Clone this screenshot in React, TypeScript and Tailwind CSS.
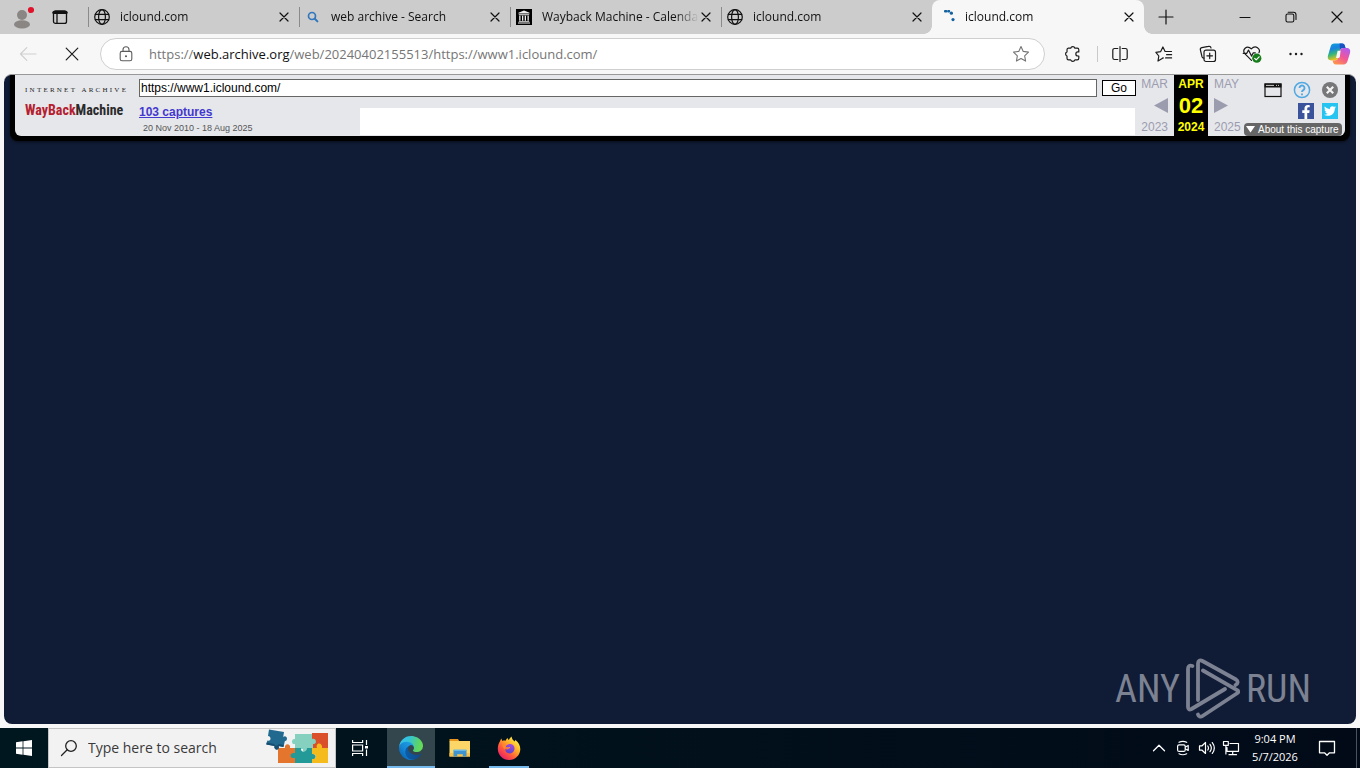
import React from "react";
import { FaFacebookF, FaTwitter } from "react-icons/fa";

const ui = "font-['Open_Sans','Noto_Sans',sans-serif]";
const arial = "font-['Liberation_Sans',Arial,sans-serif]";

type IconProps = { className?: string };

function Stroke({ children, className = "size-5", sw = 1.2, box = 20 }: { children: React.ReactNode; className?: string; sw?: number; box?: number }) {
  return (
    <svg viewBox={`0 0 ${box} ${box}`} className={className} fill="none" stroke="currentColor" strokeWidth={sw} strokeLinecap="round" strokeLinejoin="round" aria-hidden="true">
      {children}
    </svg>
  );
}

const Cross = ({ className = "size-3" }: IconProps) => (
  <Stroke className={className} box={12} sw={1.2}>
    <path d="M2 2l8 8M10 2l-8 8" />
  </Stroke>
);

const Globe = () => (
  <Stroke className="size-4 shrink-0" box={16} sw={1.2}>
    <circle cx="8" cy="8" r="7.3" />
    <ellipse cx="8" cy="8" rx="3.4" ry="7.3" />
    <path d="M1.3 5.3h13.4M1.3 10.7h13.4" />
  </Stroke>
);

const Lens = () => (
  <svg viewBox="0 0 16 16" className="size-4 shrink-0" fill="none" stroke="#3277bd" strokeLinecap="round" aria-hidden="true">
    <circle cx="7" cy="7" r="3.5" strokeWidth="1.7" />
    <path d="M9.8 9.8l2.6 2.6" strokeWidth="2" />
  </svg>
);

const ArchiveMark = () => (
  <svg viewBox="0 0 16 16" className="size-4 shrink-0" aria-hidden="true">
    <path fill="#000" d="M0 0h16v16H0z" />
    <path fill="#eee" d="M8 1.600l5.600 2.200v.8H2.400v-.8zM2.800 5.200h10.400v1H2.800zM3.200 6.800h1.300v5H3.200zM6 6.800h1.300v5H6zM8.700 6.800H10v5H8.700zM11.500 6.800h1.300v5h-1.300zM2.800 12.200h10.400v.8H2.800zM2 13.600h12v1H2z" />
  </svg>
);

const Loading = () => (
  <svg viewBox="0 0 16 16" className="size-4 shrink-0" fill="#12609f" aria-hidden="true">
    <rect x="5" y="1" width="3.4" height="2.6" rx="1" />
    <rect x="8.2" y="1" width="3" height="2.4" rx="1" />
    <circle cx="12.400" cy="4.200" r="1.600" />
    <circle cx="14" cy="10.600" r="1.600" />
  </svg>
);

function Tab({ icon, title, active }: { icon: React.ReactNode; title: string; active?: boolean }) {
  return (
    <div
      role="tab"
      aria-selected={!!active}
      className={
        active
          ? "relative flex h-full w-[212px] min-w-0 items-center rounded-t-lg bg-[#f7f7f7] pr-2 pl-[7px]"
          : "flex h-full w-[211px] min-w-0 items-center pr-2"
      }
    >
      {!active && <span className="mr-[5px] h-5 w-px shrink-0 bg-[#8a8a8a]" />}
      {active && (
        <>
          <span className="absolute bottom-0 -left-2 size-2 bg-[radial-gradient(circle_at_0_0,#cccccc_7.5px,#f7f7f7_8px)]" />
          <span className="absolute -right-2 bottom-0 size-2 bg-[radial-gradient(circle_at_100%_0,#cccccc_7.5px,#f7f7f7_8px)]" />
        </>
      )}
      {icon}
      <span className="ml-2.5 min-w-0 flex-1 overflow-hidden whitespace-nowrap text-[12px] leading-4 text-[#111] [mask-image:linear-gradient(to_right,#000_calc(100%-24px),transparent)]">
        {title}
      </span>
      <button aria-label={`Close ${title}`} className="flex size-3.5 shrink-0 items-center justify-center">
        <Cross />
      </button>
    </div>
  );
}

function TabStrip() {
  return (
    <div className="flex h-[34px] items-center bg-[#cccccc] text-[#111]">
      <div className="flex w-[88px] shrink-0 items-center">
        <button aria-label="Profile" className="flex w-11 justify-center">
          <svg viewBox="0 0 24 24" className="size-6" aria-hidden="true">
            <circle cx="12" cy="10" r="5" fill="#8a8683" />
            <ellipse cx="12" cy="19.4" rx="8" ry="4.2" fill="#8a8683" />
            <circle cx="21" cy="5" r="3.1" fill="#e0132b" />
          </svg>
        </button>
        <button aria-label="Tab actions" className="flex w-8 justify-center">
          <Stroke className="size-4" box={16} sw={1.3}>
            <rect x="1.5" y="1.8" width="13" height="12.6" rx="2" />
            <path d="M1.8 3.4h12.4" strokeWidth="3" />
            <path d="M5 4v10" />
          </Stroke>
        </button>
      </div>
      <div role="tablist" className="flex h-full min-w-0">
        <Tab icon={<Globe />} title="iclound.com" />
        <Tab icon={<Lens />} title="web archive - Search" />
        <Tab icon={<ArchiveMark />} title="Wayback Machine - Calenda" />
        <Tab icon={<Globe />} title="iclound.com" />
        <Tab icon={<Loading />} title="iclound.com" active />
      </div>
      <button aria-label="New tab" className="flex w-11 shrink-0 justify-center">
        <Stroke className="size-4" box={16} sw={1.2}>
          <path d="M8 1v14M1 8h14" />
        </Stroke>
      </button>
      <div className="ml-auto flex shrink-0">
        <button aria-label="Minimize" className="flex w-[46px] items-center justify-center">
          <Stroke className="size-3" box={12} sw={1.1}><path d="M1 6.5h10" /></Stroke>
        </button>
        <button aria-label="Restore" className="flex w-[46px] items-center justify-center">
          <Stroke className="size-3" box={12} sw={1.1}>
            <rect x="1" y="3" width="7.8" height="8" rx="1.6" />
            <path d="M3.2 1.2h5.2a2.6 2.6 0 0 1 2.6 2.6v4.6" />
          </Stroke>
        </button>
        <button aria-label="Close" className="flex w-[46px] items-center justify-center">
          <Stroke className="size-3" box={12} sw={1.2}><path d="M1 1l10 10M11 1L1 11" /></Stroke>
        </button>
      </div>
    </div>
  );
}

const Copilot = () => (
  <svg viewBox="0 0 24 24" className="size-6" aria-hidden="true">
    <defs>
      <linearGradient id="cpA" x1="0" y1="0" x2="0.3" y2="1">
        <stop offset="0" stopColor="#0ea5d8" />
        <stop offset="0.35" stopColor="#1883e0" />
        <stop offset="0.65" stopColor="#35b77a" />
        <stop offset="1" stopColor="#f5c518" />
      </linearGradient>
      <linearGradient id="cpB" x1="0.8" y1="0" x2="0.2" y2="1">
        <stop offset="0" stopColor="#b05cf0" />
        <stop offset="0.5" stopColor="#f0559a" />
        <stop offset="1" stopColor="#ff9548" />
      </linearGradient>
    </defs>
    <path fill="url(#cpA)" d="M7.4 1.6h7.8c1.5 0 2.2.7 2.6 2l.7 2.5h-2.4c-1.7 0-2.6.8-3.1 2.5l-2.2 7.6c-.5 1.6-1.3 2.3-2.9 2.3H4.4c-2.8 0-4.2-1.8-3.4-4.9L3.500 5C4.200 2.600 5.300 1.600 7.400 1.600z" />
    <path fill="#1a52c4" d="M12.500 1.600h2.700c1.500 0 2.200.7 2.600 2l.7 2.500h-2.400c-1.500 0-2.400.6-3 2z" />
    <path fill="url(#cpB)" d="M16.600 22.400H8.800c-1.500 0-2.200-.7-2.600-2l-.6-1.900h2.300c1.700 0 2.600-.8 3.100-2.500l2.200-7.600c.5-1.600 1.300-2.300 2.900-2.300h3.500c2.800 0 4.200 1.800 3.400 4.900L20.500 19c-.7 2.400-1.800 3.400-3.900 3.400z" />
    <path fill="#f7f7f7" d="M10.600 8.800h3L12.900 14.600c-.1.900-.6 1.300-1.400 1.300H9z" />
  </svg>
);

function AddressBar() {
  const tool = "flex h-8 w-11 shrink-0 items-center justify-center";
  return (
    <div className="flex h-10 items-center bg-[#f7f7f7] text-[#1b1b1b]">
      <button aria-label="Back" className="flex w-14 shrink-0 justify-center text-[#cfcfcf]">
        <Stroke><path d="M2.500 10h15.500M8.800 3.700L2.500 10l6.300 6.300" /></Stroke>
      </button>
      <button aria-label="Stop" className="mr-3 flex w-8 shrink-0 justify-center">
        <Stroke className="size-4" box={16} sw={1.2}><path d="M2.200 2.200l11.600 11.600M13.800 2.200L2.200 13.800" /></Stroke>
      </button>
      <div className="flex h-8 min-w-0 flex-1 items-center rounded-full border border-[#cfcfcf] bg-white pr-3.5 pl-4">
        <button aria-label="Site information" className="flex text-[#5c5c5c]">
          <Stroke className="size-[18px]" box={18} sw={1.1}>
            <rect x="3.200" y="6.400" width="11.600" height="9.400" rx="1.800" />
            <path d="M6 6.300V4.800a3 3 0 0 1 6 0v1.500" />
            <circle cx="9" cy="11.200" r=".5" fill="currentColor" />
          </Stroke>
        </button>
        <div className="ml-3.5 min-w-0 flex-1 overflow-hidden text-[13px] leading-5 whitespace-nowrap text-[#767676]">
          https://<span className="text-[#111]">web.archive.org</span>/web/20240402155513/https://www1.iclound.com/
        </div>
        <button aria-label="Add to favorites" className="flex text-[#757575]">
          <Stroke className="size-[18px]" box={18} sw={1.1}>
            <path d="M9 1.500l2.250 4.900 5.250.7-3.850 3.700.95 5.300L9 13.500l-4.600 2.600.95-5.300L1.500 7.100l5.250-.7z" />
          </Stroke>
        </button>
      </div>
      <div className="ml-2 flex shrink-0 items-center">
        <button aria-label="Extensions" className="flex h-8 w-10 shrink-0 items-center justify-center pr-px">
          <Stroke className="size-[18px]" box={18} sw={1.200}>
            <path d="M4.400 3.200h2.300a2.200 2.200 0 0 1 4.200 0h2.300a1.600 1.600 0 0 1 1.600 1.600v2.100h-.9a2 2 0 0 0 0 4.100h.9v2.300a1.600 1.600 0 0 1-1.600 1.600h-2.300a2.200 2.200 0 0 1-4.200 0H4.600A1.600 1.600 0 0 1 3 13.300V11a2.200 2.200 0 0 1 0-4.100V4.800a1.600 1.600 0 0 1 1.400-1.600z" />
          </Stroke>
        </button>
        <span className="ml-1 h-4 w-px bg-[#c9c9c9]" />
        <button aria-label="Split screen" className={tool}>
          <Stroke className="size-[18px]" box={18} sw={1.200}>
            <path d="M9 1.500v15M6.800 3.500H3.600A1.800 1.800 0 0 0 1.800 5.300v7.400a1.800 1.800 0 0 0 1.800 1.800h3.200M11.200 3.500h3.200a1.800 1.800 0 0 1 1.800 1.800v7.400a1.800 1.800 0 0 1-1.800 1.800h-3.200" />
          </Stroke>
        </button>
        <button aria-label="Favorites" className={tool}>
          <Stroke className="size-[18px]" box={18} sw={1.200}>
            <path d="M8.300 12.900l-1.100.5L3 16l.8-5L.9 7.300l4.800-.7L7.900 2l2.200 4.500h6.400M11.600 9.700h5M10.600 12.900h6" />
          </Stroke>
        </button>
        <button aria-label="Collections" className={tool}>
          <Stroke className="size-[18px]" box={18} sw={1.200}>
            <path d="M5 13.100a2 2 0 0 1-2-1.400L1.400 5a2 2 0 0 1 1.400-2.400l6.600-1.200A2 2 0 0 1 12 3" />
            <rect x="5" y="5.200" width="11.500" height="11.300" rx="2" />
            <path d="M10.700 8v5.600M7.900 10.800h5.600" />
          </Stroke>
        </button>
        <button aria-label="Browser essentials" className={tool}>
          <svg viewBox="0 0 20 20" className="size-5" fill="none" stroke="currentColor" strokeWidth="1.200" strokeLinecap="round" strokeLinejoin="round" aria-hidden="true">
            <path d="M9.500 16.300L3 9.800C-.3 6.100 4.500.3 9.300 4.800c4.500-4.600 9.500.4 7.700 3.800M1.200 9.300h3.600l1.700-3.200 3 6 1.800-3.300h2" />
            <circle cx="14.800" cy="14.200" r="4.600" fill="#177d1b" stroke="none" />
            <path d="M12.700 14.300l1.500 1.500 2.900-3" stroke="#fff" />
          </svg>
        </button>
        <button aria-label="Settings and more" className={tool}>
          <svg viewBox="0 0 18 18" className="size-[18px]" fill="currentColor" aria-hidden="true">
            <circle cx="3.500" cy="9" r="1.200" /><circle cx="9" cy="9" r="1.200" /><circle cx="14.500" cy="9" r="1.200" />
          </svg>
        </button>
        <button aria-label="Copilot" className="flex h-8 w-[42px] shrink-0 items-center justify-center"><Copilot /></button>
      </div>
    </div>
  );
}

function WaybackBar() {
  return (
    <div className={`mx-1.5 rounded-b-lg border-x-[5px] border-b-[5px] border-black bg-black shadow-[0_1px_3px_#0008] ${arial}`}>
      <div className="flex h-[61px] rounded-b-md bg-[#e6e7eb] pr-[3px]">
        <a href="#home" aria-label="Internet Archive Wayback Machine" className="flex w-[124px] shrink-0 flex-col items-start pt-[11px] pl-2.5 whitespace-nowrap">
          <span className="flex w-[101px] justify-between font-['Liberation_Serif',serif] text-[7px] leading-2 text-[#222]">
            {"INTERNET".split("").map((c, i) => <span key={i}>{c}</span>)}
            <span className="w-0.5" />
            {"ARCHIVE".split("").map((c, i) => <span key={i}>{c}</span>)}
          </span>
          <span className="font-['Roboto_Condensed','Liberation_Sans_Narrow',sans-serif] text-[14px] leading-8 font-bold text-[#b4202f]">
            WayBack<span className="text-[#2a2a2a]">Machine</span>
          </span>
        </a>
        <div className="flex min-w-0 flex-1 flex-col">
          <form className="flex gap-[5px] pt-1" onSubmit={(e) => e.preventDefault()}>
            <input aria-label="Archived address" defaultValue="https://www1.iclound.com/" className="h-[18px] min-w-0 flex-1 border border-[#666] bg-white px-px text-[12px] leading-4 text-black" />
            <button className="mt-px h-4 w-[34px] border border-black bg-white text-[12px] leading-3 text-black">Go</button>
          </form>
          <div className="flex flex-1">
            <div className="flex w-[221px] shrink-0 flex-col items-start pt-[7px]">
              <a href="#captures" className="text-[12px] leading-4 font-bold text-[#4338cf] underline">103 captures</a>
              <span className="pt-0.5 pl-1 text-[9px] leading-3 text-[#555]">20 Nov 2010 - 18 Aug 2025</span>
            </div>
            <div className="mt-[11px] mr-px mb-px flex-1 bg-white" />
          </div>
        </div>
        <div className="grid shrink-0 grid-cols-[38px_34px_36px] text-[12px] text-[#9c9caf]">
          <div className="flex flex-col items-end justify-between pt-0.5 pr-1.5 pb-0.5">
            <span className="leading-[14px]">MAR</span>
            <svg viewBox="0 0 14 15" className="h-[15px] w-3.5" fill="#9c9caf" aria-hidden="true"><path d="M14 0v15L0 7.500z" /></svg>
            <span className="leading-[14px]">2023</span>
          </div>
          <div className="flex flex-col items-center justify-between bg-black pt-0.5 pb-0.5 font-bold text-[#ffff00]">
            <span className="leading-[14px]">APR</span>
            <span className="text-[22px] leading-6">02</span>
            <span className="leading-[14px]">2024</span>
          </div>
          <div className="flex flex-col items-start justify-between pt-0.5 pb-0.5 pl-1.5">
            <span className="leading-[14px]">MAY</span>
            <svg viewBox="0 0 14 15" className="h-[15px] w-3.5" fill="#9c9caf" aria-hidden="true"><path d="M0 0v15l14-7.500z" /></svg>
            <span className="leading-[14px]">2025</span>
          </div>
        </div>
        <div className="flex w-[98px] shrink-0 flex-col items-end pt-1.5">
          <div className="flex w-full items-center justify-between pr-1 pl-5">
            <button aria-label="Screenshot">
              <svg viewBox="0 0 18 16" className="block h-4 w-[18px]" aria-hidden="true">
                <path fill="#111" d="M.5 1.500h17V5.500H.5z" />
                <path fill="#eee" d="M2 2.800h8v1H2zM12 2.800h1v1h-1zM14 2.800h1v1h-1z" />
                <rect x="1" y="2" width="16" height="12.500" fill="none" stroke="#111" strokeWidth="1.200" />
              </svg>
            </button>
            <button aria-label="Help">
              <svg viewBox="0 0 18 18" className="block size-[18px]" fill="none" stroke="#51a8e2" aria-hidden="true">
                <circle cx="9" cy="9" r="7.600" strokeWidth="1.500" />
                <path d="M6.500 7a2.500 2.500 0 1 1 3.800 2.100c-.9.600-1.300 1-1.300 2" strokeWidth="1.900" />
                <path d="M9 12.400v1.800" strokeWidth="1.900" />
              </svg>
            </button>
            <button aria-label="Hide toolbar">
              <svg viewBox="0 0 16 16" className="block size-4" aria-hidden="true">
                <circle cx="8" cy="8" r="8" fill="#77777a" />
                <path d="M4.800 4.800l6.400 6.400M11.200 4.800l-6.400 6.400" stroke="#f4f4f4" strokeWidth="2.200" />
              </svg>
            </button>
          </div>
          <div className="flex gap-2 pt-1 pr-1 pb-1">
            <a href="#facebook" aria-label="Share on Facebook" className="flex size-4 items-end justify-end bg-[#3a539b] pr-px text-white">
              <FaFacebookF className="size-3.5" />
            </a>
            <a href="#twitter" aria-label="Share on Twitter" className="flex size-4 items-center justify-center bg-[#26c4f1] text-white">
              <FaTwitter className="size-3" />
            </a>
          </div>
          <button className="flex h-[13px] w-full shrink-0 items-center gap-[3px] rounded bg-[#666] pl-0.5 text-[10px] leading-3 whitespace-nowrap text-white">
            <svg viewBox="0 0 9 7" className="h-[7px] w-[9px]" fill="#fff" aria-hidden="true"><path d="M0 0h9L4.500 6.500z" /></svg>
            About this capture
          </button>
        </div>
      </div>
    </div>
  );
}

function Watermark() {
  const word = "font-['Roboto_Condensed','Liberation_Sans_Narrow',sans-serif] text-[38px] leading-10";
  return (
    <div className="absolute right-[45px] bottom-1 flex items-center gap-1.5 text-[#7c8292]">
      <span className={word}>ANY</span>
      <svg viewBox="0 0 54 62" className="h-[62px] w-[54px]" fill="none" stroke="currentColor" strokeWidth="3.800" strokeLinecap="round" strokeLinejoin="round" aria-hidden="true">
        <path d="M6.500 8c-3-1-4.500 0-4.500 3V49c0 2.500 1.300 3 3.500 2L39 31" />
        <path d="M12 42V5.500c0-3 2-4 4.500-2.500L50 21.500c2.400 1.500 2 4.600-.5 5.500" />
        <path d="M17 12.500L51.500 32.300c1 .8 1 2 0 2.700L16.500 58c-2 1.300-4 .3-4.500-1.500" />
      </svg>
      <span className={word}>RUN</span>
    </div>
  );
}

const PuzzleArt = () => (
  <svg viewBox="0 0 64 38" className="h-[38px] w-16 shrink-0" aria-hidden="true">
    <path fill="#d9502a" d="M46 4h16v16H46z" />
    <path fill="#85d0bf" d="M29 5h17v5c4-2 6 5 1 5v5h-5c1 5-6 5-5 0h-8v-5c-4 1-4-6 0-5z" />
    <path fill="#e4752d" d="M12 19h7c-1-5 6-5 5 0h6v15H12z" />
    <path fill="#239a98" d="M29 19h6c-1 5 6 5 6 0h5v6c5-1 5 6 0 5v4H29v-5c-6 1-6-6 0-5z" />
    <path fill="#f5ba1b" d="M46 19h5c-2-6 6-6 5 0h6v15H46v-4c5 1 5-6 0-5z" />
    <path fill="#22698f" d="M3 .5L18 3l-.8 5c3-3 6 3 1.600 4.300L17.500 18l-5-1c2 5-5 5-4 0L.5 15.500l.8-4C5.500 13 5.500 7 2 7z" />
    <path fill="#174d70" d="M.5 13.500l8 1.500c-.5 2 3 2 4 0l5.200 1-.4 2-4.500-.9c1 5-5.500 4-4.300 0l-8.200-1.600z" />
  </svg>
);

const EdgeLogo = () => (
  <svg viewBox="0 0 256 256" className="size-6" aria-hidden="true">
    <defs>
      <linearGradient id="edA" x1="0.2" y1="0.5" x2="1" y2="0.6"><stop stopColor="#0c59a4" /><stop offset="1" stopColor="#114a8b" /></linearGradient>
      <linearGradient id="edB" x1="0.8" y1="0.2" x2="0.2" y2="0.9"><stop stopColor="#1b9de2" /><stop offset="0.5" stopColor="#1787d4" /><stop offset="1" stopColor="#0667b8" /></linearGradient>
      <linearGradient id="edC" x1="0" y1="0.3" x2="1" y2="0.5"><stop stopColor="#35c1f1" /><stop offset="0.4" stopColor="#34c3d5" /><stop offset="0.8" stopColor="#5bd46a" /><stop offset="1" stopColor="#66dc56" /></linearGradient>
    </defs>
    <path fill="url(#edA)" d="M231 190.500c-3.400 1.800-6.900 3.400-10.500 4.700a101.500 101.500 0 0 1-35.900 6.500c-47.300 0-88.500-32.500-88.500-74.300a31.500 31.500 0 0 1 16.400-27.300c-42.800 1.800-53.800 46.400-53.800 72.500 0 74 68.100 81.400 82.800 81.400 7.900 0 19.800-2.300 27-4.600l1.300-.4a128.300 128.300 0 0 0 66.600-52.800 4 4 0 0 0-5.400-5.700z" />
    <path fill="url(#edB)" d="M105.700 241.500a79.200 79.200 0 0 1-22.700-21.300 80.700 80.700 0 0 1 29.500-120c3.200-1.500 8.500-4.100 15.600-4a32.400 32.400 0 0 1 25.700 13 31.900 31.900 0 0 1 6.300 18.700c0-.2 24.500-79.600-80-79.600-43.900 0-80 41.600-80 78.200a130.200 130.200 0 0 0 12.100 56 128 128 0 0 0 156.400 67 75.500 75.500 0 0 1-62.800-8z" />
    <path fill="url(#edC)" d="M152.300 148.900c-.8 1-3.300 2.500-3.300 5.700 0 2.600 1.700 5.100 4.700 7.200 14.400 10 41.500 8.700 41.600 8.700a59.600 59.600 0 0 0 30.300-8.400 61.400 61.400 0 0 0 30.400-52.900c.3-22.400-8-37.300-11.300-43.900C223.500 23.900 177.700 0 128 0A128 128 0 0 0 0 126.200c.5-36.500 36.800-66 80-66 3.500 0 23.500.3 42 10 16.300 8.600 24.900 19 30.800 29.200 6.200 10.700 7.300 24.100 7.300 29.500s-2.700 13.300-7.800 19.900z" />
  </svg>
);

const Explorer = () => (
  <svg viewBox="0 0 24 24" className="size-6" aria-hidden="true">
    <path fill="#e8961e" d="M1.500 3h8.500l1.500 2.500h-10z" />
    <path fill="#fcd768" d="M1.500 5h20.500v15.500H1.500z" />
    <path fill="#f8c24a" d="M1.500 17h20.500v3.500H1.500z" />
    <path fill="#3c93cf" d="M5.500 14h13v6.500h-3.700v-2.200H9.200v2.200H5.500z" />
    <path fill="#6ab8e6" d="M5.500 13.500h13V15h-13z" />
  </svg>
);

const Firefox = () => (
  <svg viewBox="0 0 24 24" className="size-6" aria-hidden="true">
    <defs>
      <linearGradient id="ffA" x1="0.85" y1="0.1" x2="0.15" y2="0.95">
        <stop stopColor="#fff04a" /><stop offset="0.35" stopColor="#ffae26" /><stop offset="0.65" stopColor="#ff5a3c" /><stop offset="1" stopColor="#e8186e" />
      </linearGradient>
      <linearGradient id="ffB" x1="0.6" y1="0" x2="0.3" y2="1"><stop stopColor="#a04be0" /><stop offset="1" stopColor="#5b44c9" /></linearGradient>
    </defs>
    <path fill="url(#ffA)" d="M3.100 5.100c.3-1 .8-1.900 1.500-2.500 0 1 .2 1.700.7 2.300 1-.5 2.200-.6 3.300-.2C9 3.500 9.800 2.600 10.800 2c-.1 1 .3 1.600 1 2.100C12.500 3 12.900 1.500 14.600.4c.1 2.400 1.500 3.700 3.200 5.200.4-.7.400-1.200.3-1.900 3.500 2.600 5.200 6 5.200 9.200A11.200 11.200 0 0 1 12 24 11.200 11.200 0 0 1 .8 12.800c0-3 .9-5.500 2.300-7.700z" />
    <path fill="url(#ffB)" d="M8.200 9.500c2-.2 3-1.900 5.500-1.400 3 .5 4.400 3.200 3.600 5.800-.8 2.700-3.300 3.900-5.700 3.400-2.700-.6-3.600-2.600-3.200-4.300 1 .6 2.200.5 3.200-.2l1.500-.8c.5-.5-.2-1.100-.9-1.100-1 0-2.100.8-4-.1z" />
    <path fill="#ff8a2a" d="M5.400 8.400c1.300.6 2.700 0 4.400.9l-1 1.300c-.6 1-.6 1.800-.4 2.700-1.800-.8-3-2.600-3-4.900z" />
  </svg>
);

function Taskbar() {
  return (
    <div className="flex h-10 items-stretch bg-linear-to-r from-[#00171f] to-[#020a18] text-white">
      <button aria-label="Start" className="flex w-12 shrink-0 items-center justify-center">
        <svg viewBox="0 0 16 16" className="size-4" fill="#fff" aria-hidden="true">
          <path d="M0 2.200l6.600-.9v6.300H0zM7.400 1.200L16 0v7.600H7.400zM0 8.400h6.600v6.300L0 13.800zM7.400 8.400H16V16l-8.600-1.200z" />
        </svg>
      </button>
      <label className="flex w-72 items-center border border-[#c4c4c4] bg-[#f2f2f2] pr-[5px] pl-[11px] text-[#222]">
        <Stroke className="size-[18px] shrink-0" box={18} sw={1.300}>
          <circle cx="11" cy="7" r="5.300" />
          <path d="M7.200 10.800L1.500 16.500" />
        </Stroke>
        <input aria-label="Search" placeholder="Type here to search" className="ml-2.5 min-w-0 flex-1 bg-transparent text-[14px] leading-5 placeholder:text-[#3a3a3a]" />
        <PuzzleArt />
      </label>
      <button aria-label="Task view" className="flex w-12 items-center justify-center">
        <svg viewBox="0 0 18 18" className="size-[18px]" fill="none" stroke="#fff" strokeWidth="1.200" aria-hidden="true">
          <path d="M1.600 1v2.500h10V1M1.600 17v-2.500h10V17M1.600 6h10v6h-10zM15.500 1v5M15.500 10.500V17" />
          <path d="M14 7h3v2.500h-3z" fill="#fff" stroke="none" />
        </svg>
      </button>
      <button aria-label="Microsoft Edge" className="ml-[3px] flex w-12 items-center justify-center border-b-2 border-[#76b9ed] bg-[#33464d] pt-0.5"><EdgeLogo /></button>
      <button aria-label="File Explorer" className="flex w-[50px] items-center justify-center"><Explorer /></button>
      <button aria-label="Firefox" className="ml-1 flex w-10 items-center justify-center border-b-2 border-[#76b9ed] pt-0.5"><Firefox /></button>
      <div className="ml-auto flex items-center">
        <button aria-label="Show hidden icons" className="flex w-6 justify-center">
          <Stroke className="size-3.5" box={14} sw={1.300}><path d="M1.500 9.800L7 4.300l5.500 5.500" /></Stroke>
        </button>
        <button aria-label="Meet now" className="flex w-6 justify-center">
          <Stroke className="size-4" box={16} sw={1.200}>
            <rect x="2.600" y="4.800" width="7.600" height="6.600" rx="1.500" />
            <path d="M10.500 7l2.700-1.500v5L10.500 9M4 2.300c2.400-1.200 5.300-1.200 7.700 0M4 13.800c2.400 1.200 5.300 1.200 7.700 0" />
          </Stroke>
        </button>
        <button aria-label="Volume" className="flex w-6 justify-center">
          <Stroke className="size-[18px]" box={18} sw={1.200}>
            <path d="M1.500 6.800h2.600L7.500 3.500v11L4.100 11.200H1.500zM9.800 7c.8 1.200.8 2.800 0 4M12 5.300c1.600 2.200 1.600 5.200 0 7.400M14.300 3.600c2.400 3.200 2.400 7.600 0 10.800" />
          </Stroke>
        </button>
        <button aria-label="Network" className="flex w-6 justify-center">
          <Stroke className="size-[18px]" box={18} sw={1.200}>
            <path d="M8 4.500h8.500v7.800H5V8.500M10.700 12.500v3M7 15.700h7.500M1.500 2.500h4.800v3.800H1.500zM3.900 6.500v8.500" />
          </Stroke>
        </button>
        <div className="flex w-16 flex-col items-center text-[11px] leading-[18px] whitespace-nowrap">
          <span>9:04 PM</span>
          <span>5/7/2026</span>
        </div>
        <button aria-label="Notifications" className="mr-[9px] flex w-10 justify-center">
          <Stroke className="size-[18px]" box={18} sw={1.300}>
            <path d="M1.500 2.500h15v11.300h-5L9 16.200l-2.500-2.400h-5z" />
          </Stroke>
        </button>
        <span className="mr-[3px] h-10 w-px bg-[#4a5160]" />
      </div>
    </div>
  );
}

export default function App() {
  return (
    <div className={`flex min-h-screen flex-col bg-[#f7f7f7] ${ui}`}>
      <TabStrip />
      <AddressBar />
      <main className="relative mx-1 mb-1 flex-1 overflow-hidden rounded-lg border-t border-[#999] bg-[#101b35]">
        <WaybackBar />
        <Watermark />
      </main>
      <Taskbar />
    </div>
  );
}
